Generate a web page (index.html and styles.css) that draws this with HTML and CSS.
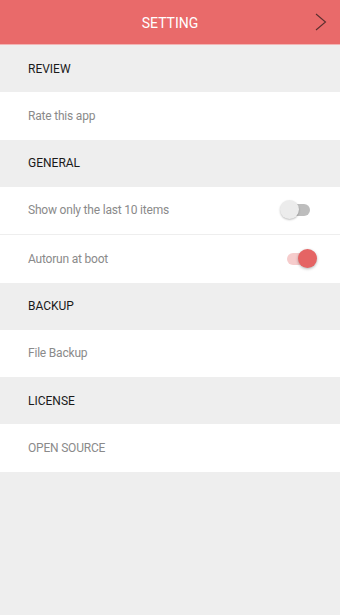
FILE: index.html
```html
<!DOCTYPE html>
<html lang="en">
<head>
    <meta charset="UTF-8">
    <meta name="viewport" content="width=device-width, initial-scale=1.0">
    <title>Setting</title>
    <link rel="stylesheet" href="styles.css">
</head>
<body>
    <header class="top-bar">
        <span></span>
        <h1>SETTING</h1>
        <span class="next">
            <svg xmlns="http://www.w3.org/2000/svg" width="12" height="18" viewBox="0 0 12 18"><polyline points="1,1 10.5,9 1,17" fill="none" stroke="#5b2f2f" stroke-width="1.1"></polyline></svg>
        </span>
    </header>

    <div class="section-title">REVIEW</div>
    <div class="item">Rate this app</div>

    <div class="section-title">GENERAL</div>
    <div class="item">
        <span>Show only the last 10 items</span>
        <span class="switch"><span class="track"></span><span class="thumb"></span></span>
    </div>
    <div class="item">
        <span>Autorun at boot</span>
        <span class="switch on"><span class="track"></span><span class="thumb"></span></span>
    </div>

    <div class="section-title">BACKUP</div>
    <div class="item">File Backup</div>

    <div class="section-title">LICENSE</div>
    <div class="item">OPEN SOURCE</div>
</body>
</html>
```

FILE: styles.css
```css
body {
    margin: 0;
    font-family: Roboto, 'Noto Sans', sans-serif;
    background-color: #eeeeee;
    min-height: 100vh;
}

.top-bar {
    display: grid;
    grid-template-columns: 1fr auto 1fr;
    align-items: center;
    height: 44px;
    background-color: #e96a6a;
    border-bottom: 1px solid #f2b4b4;
}

.top-bar h1 {
    margin: 2px 0 0;
    font-size: 14px;
    font-weight: 400;
    color: #fff;
}

.next {
    justify-self: end;
    display: flex;
    margin-right: 13px;
}

.section-title {
    display: flex;
    align-items: center;
    height: 47px;
    padding-left: 28px;
    font-size: 12px;
    color: #1a1a1a;
}

.item {
    display: flex;
    align-items: center;
    justify-content: space-between;
    height: 47.5px;
    padding-left: 28px;
    padding-right: 23px;
    background-color: #fff;
    font-size: 12px;
    letter-spacing: -0.2px;
    color: #8a8a8a;
}

.item + .item {
    border-top: 1px solid #eeeeee;
}

.switch {
    position: relative;
    display: flex;
    align-items: center;
    width: 37px;
    height: 20px;
}

.track {
    margin-left: 7px;
    width: 23px;
    height: 12px;
    border-radius: 6px;
    background-color: #bdbdbd;
}

.thumb {
    position: absolute;
    left: 0;
    top: 0;
    width: 19px;
    height: 19px;
    border-radius: 50%;
    background-color: #ececec;
    box-shadow: 0 1px 2px rgba(0, 0, 0, 0.25);
}

.switch.on .track {
    background-color: #f6cccc;
}

.switch.on .thumb {
    left: 18px;
    background-color: #e56464;
    box-shadow: 0 1px 3px rgba(0, 0, 0, 0.3);
}
```
